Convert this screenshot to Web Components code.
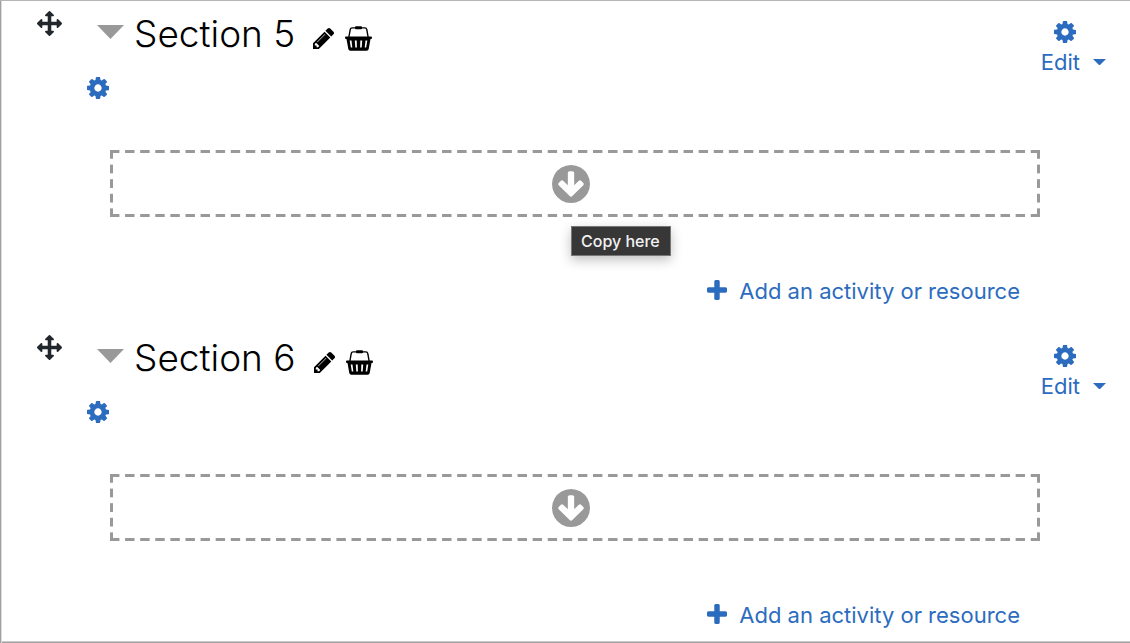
<!DOCTYPE html>
<html lang="en">
<head>
<meta charset="utf-8">
<title>Course sections</title>
<style>
body { margin: 0; background: #fff; color: #000; font-family: Inter, sans-serif; }
</style>
</head>
<body>
<course-page>
  <course-section name="Section 5"><copy-tip slot="tip">Copy here</copy-tip></course-section>
  <course-section name="Section 6"></course-section>
</course-page>
<script>
const ICONS = {
  gear: ['128 128 1536 1536', '<path d="M1152 896q0-106-75-181t-181-75-181 75-75 181 75 181 181 75 181-75 75-181zm512-109v222q0 12-8 23t-20 13l-185 28q-19 54-39 91 35 50 107 138 10 12 10 25t-9 23q-27 37-99 108t-94 71q-12 0-26-9l-138-108q-44 23-91 38-16 136-29 186-7 28-36 28h-222q-14 0-24.5-8.5t-11.5-21.5l-28-184q-49-16-90-37l-141 107q-10 9-25 9-14 0-25-11-126-114-165-168-7-10-7-23 0-12 8-23 15-21 51-66.5t54-70.5q-27-50-41-99l-183-27q-13-2-21-12.5t-8-23.5v-222q0-12 8-23t19-13l186-28q14-46 39-92-40-57-107-138-10-12-10-24 0-10 9-23 26-36 98.5-107.5t94.5-71.5q13 0 26 10l138 107q44-23 91-38 16-136 29-186 7-28 36-28h222q14 0 24.5 8.5t11.5 21.5l28 184q49 16 90 37l142-107q9-9 24-9 13 0 25 10 129 119 165 170 7 8 7 22 0 12-8 23-15 21-51 66.5t-54 70.5q26 50 41 98l183 28q13 2 21 12.5t8 23.5z"/>'],
  plus: ['192 128 1408 1408', '<path d="M1600 736v192q0 40-28 68t-68 28h-416v416q0 40-28 68t-68 28h-192q-40 0-68-28t-28-68v-416h-416q-40 0-68-28t-28-68v-192q0-40 28-68t68-28h416v-416q0-40 28-68t68-28h192q40 0 68 28t28 68v416h416q40 0 68 28t28 68z"/>'],
  pencil: ['128 149 1515 1515', '<path d="M491 1536l91-91-235-235-91 91v107h128v128h107zm523-928q0-22-22-22-10 0-17 7l-542 542q-7 7-7 17 0 22 22 22 10 0 17-7l542-542q7-7 7-17zm-54-192l416 416-832 832h-416v-416zm683 96q0 53-37 90l-166 166-416-416 166-165q36-38 90-38 53 0 91 38l235 234q37 39 37 91z"/>'],
  move: ['0 0 1792 1792', '<path d="M1792 896q0 26-19 45l-256 256q-19 19-45 19t-45-19-19-45v-128h-384v384h128q26 0 45 19t19 45-19 45l-256 256q-19 19-45 19t-45-19l-256-256q-19-19-19-45t19-45 45-19h128v-384h-384v128q0 26-19 45t-45 19-45-19l-256-256q-19-19-19-45t19-45l256-256q19-19 45-19t45 19 19 45v128h384v-384h-128q-26 0-45-19t-19-45 19-45l256-256q19-19 45-19t45 19l256 256q19 19 19 45t-19 45-45 19h-128v384h384v-128q0-26 19-45t45-19 45 19l256 256q19 19 19 45z"/>'],
  drop: ['128 128 1536 1536', '<path d="M1412 897q0-27-18-45l-91-91q-18-18-45-18t-45 18l-189 189v-502q0-26-19-45t-45-19h-128q-26 0-45 19t-19 45v502l-189-189q-19-19-45-19t-45 19l-91 91q-18 18-18 45t18 45l362 362 91 91q18 18 45 18t45-18l91-91 362-362q18-18 18-45zm252-1q0 209-103 385.5t-279.5 279.5-385.5 103-385.5-103-279.5-279.5-103-385.5 103-385.5 279.5-279.5 385.5-103 385.5 103 279.5 279.5 103 385.5z"/>'],
  basket: ['0 0 27 25', '<path d="M3.900 11L5.200 3.600Q5.500 1.900 7.200 1.900H19.800Q21.500 1.900 21.800 3.600L23.100 11" fill="none" stroke="currentColor" stroke-width="1.400"/><rect x="10" y="0.300" width="7" height="3" rx="1"/><path fill-rule="evenodd" d="M1 10.500H26Q27 10.500 27 11.700T26 13H25.500L23.700 23Q23.400 24.700 21.700 24.700H5.300Q3.600 24.700 3.300 23L1.500 13H1Q0 13 0 11.700T1 10.500ZM4.700 14.500L5.800 21.500H7.300L6.500 14.500ZM9.800 14.500L10.300 21.500H11.900L11.700 14.500ZM15.300 14.500L15.100 21.500H16.700L17.200 14.500ZM20.500 14.500L19.700 21.500H21.200L22.300 14.500Z"/>'],
  fold: ['0 0 27 14', '<path d="M0 0H27L13.500 14Z"/>'],
  caret: ['0 0 12 6', '<path d="M0 0H12L6 6Z"/>']
};

class UiIcon extends HTMLElement {
  connectedCallback() {
    const [box, art] = ICONS[this.getAttribute('name')];
    this.attachShadow({ mode: 'open' }).innerHTML = `
      <style>
        :host { display: block; flex: none; width: 22px; }
        svg { display: block; width: 100%; fill: currentColor; }
      </style>
      <svg viewBox="${box}" aria-hidden="true">${art}</svg>`;
  }
}

class CopyTip extends HTMLElement {
  constructor() {
    super();
    this.attachShadow({ mode: 'open' }).innerHTML = `
      <style>
        :host {
          display: block; box-sizing: border-box; padding: 4px 10px 4px 9px; white-space: nowrap;
          border: 1px solid #777; background: #373737; color: #f2f2f2;
          font-size: 16px; font-weight: 500; line-height: 20px; box-shadow: 0 4px 12px rgba(0,0,0,.25);
        }
      </style>
      <slot></slot>`;
  }
}

class DropZone extends HTMLElement {
  constructor() {
    super();
    this.attachShadow({ mode: 'open' }).innerHTML = `
      <style>
        :host { display: block; position: relative; }
        button {
          display: flex; align-items: center; justify-content: center;
          width: 100%; height: 67px; border: 0; padding: 0 8px 0 0; color: #999; cursor: pointer;
          --across: linear-gradient(90deg, #999 9px, transparent 9px);
          --down: linear-gradient(#999 9px, transparent 9px);
          --w: calc((100% + 6px) / 62);
          --h: calc((100% + 6px) / 5);
          background:
            var(--across) 0 0 / var(--w) 3px repeat-x,
            var(--across) 0 100% / var(--w) 3px repeat-x,
            var(--down) 0 0 / 3px var(--h) repeat-y,
            var(--down) 100% 0 / 3px var(--h) repeat-y;
        }
        ui-icon { width: 38px; }
        ::slotted(*) { position: absolute; left: calc(50% - 4px); top: 76px; }
      </style>
      <button type="button" aria-label="Copy to this section"><ui-icon name="drop"></ui-icon></button>
      <slot></slot>`;
  }
}

class CourseSection extends HTMLElement {
  connectedCallback() {
    this.attachShadow({ mode: 'open' }).innerHTML = `
      <style>
        :host { display: block; }
        button, a { border: 0; padding: 0; background: none; font: inherit; color: #2c6cbf; text-decoration: none; cursor: pointer; }
        header { display: flex; align-items: flex-start; padding: 9px 24px 0 37px; }
        .move { color: #22272d; margin: 1px 35px 0 0; }
        .move ui-icon { width: 25px; }
        .fold { color: #999; margin: 15px 10px 0 0; }
        .fold ui-icon { width: 27px; }
        h3 { margin: 0; font-size: 37px; line-height: 48px; font-weight: 300; }
        .act { color: #000; margin: 18px 0 0 18px; }
        .act ui-icon { width: 21px; }
        .act.basket { margin: 16px 0 0 11px; }
        .act.basket ui-icon { width: 27px; }
        .edit { margin-left: auto; display: grid; justify-items: start; font-size: 22px; line-height: 28px; padding-top: 11px; }
        .edit > ui-icon { margin-left: 13px; }
        .edit span { display: flex; align-items: center; gap: 13px; padding-top: 5px; }
        .edit span ui-icon { width: 13px; }
        .gear { display: block; margin: 1px 0 0 87px; }
        drop-zone { margin: 51px 90px 0 110px; }
        .add { display: flex; align-items: center; width: max-content; margin: 60px 110px 0 auto; gap: 12px; font-size: 22px; line-height: 28px; }
        .add ui-icon { width: 20px; padding-bottom: 2px; }
      </style>
      <header>
        <button class="move" type="button" aria-label="Move section"><ui-icon name="move"></ui-icon></button>
        <button class="fold" type="button" aria-label="Collapse"><ui-icon name="fold"></ui-icon></button>
        <h3></h3>
        <button class="act" type="button" aria-label="Rename"><ui-icon name="pencil"></ui-icon></button>
        <button class="act basket" type="button" aria-label="Add to basket"><ui-icon name="basket"></ui-icon></button>
        <button class="edit" type="button"><ui-icon name="gear"></ui-icon><span>Edit<ui-icon name="caret"></ui-icon></span></button>
      </header>
      <button class="gear" type="button" aria-label="Section settings"><ui-icon name="gear"></ui-icon></button>
      <drop-zone><slot name="tip"></slot></drop-zone>
      <a class="add" href="#"><ui-icon name="plus"></ui-icon>Add an activity or resource</a>`;
    this.shadowRoot.querySelector('h3').textContent = this.getAttribute('name');
  }
}

class CoursePage extends HTMLElement {
  constructor() {
    super();
    this.attachShadow({ mode: 'open' }).innerHTML = `
      <style>
        :host {
          display: flex; flex-direction: column; gap: 20px;
          box-sizing: border-box; min-height: 100vh;
          border-top: 1px solid #b5b5b5;
          box-shadow: inset 1px 0 #a0a0a0, inset 2px 0 #ddd, inset 0 -1px #a0a0a0, inset 0 -2px #ccc;
        }
      </style>
      <slot></slot>`;
  }
}

customElements.define('ui-icon', UiIcon);
customElements.define('copy-tip', CopyTip);
customElements.define('drop-zone', DropZone);
customElements.define('course-section', CourseSection);
customElements.define('course-page', CoursePage);
</script>
</body>
</html>
